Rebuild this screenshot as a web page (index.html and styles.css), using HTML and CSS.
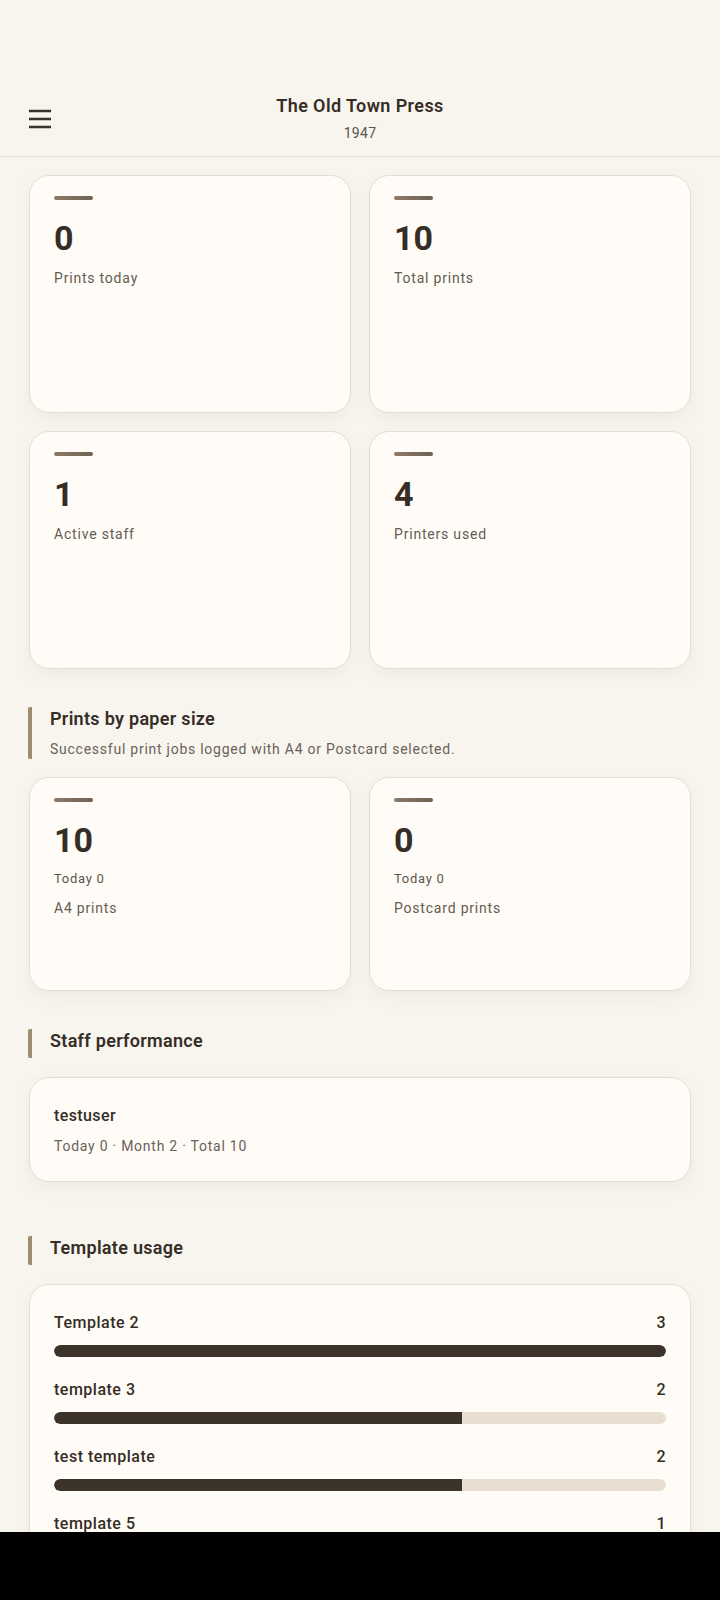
FILE: index.html
```html
<!DOCTYPE html>
<html lang="en">
<head>
<meta charset="utf-8">
<title>The Old Town Press</title>
<link rel="stylesheet" href="styles.css">
</head>
<body>
<header class="topbar">
  <div class="menu">
    <svg width="24" height="20" viewBox="0 0 24 20"><path d="M1 2h22M1 10h22M1 18h22" stroke="#3a322b" stroke-width="2.3" fill="none"/></svg>
  </div>
  <div class="brand">
    <div class="brand-title">The Old Town Press</div>
    <div class="brand-sub">1947</div>
  </div>
  <div></div>
</header>
<main class="content">
  <div class="grid">
    <div class="card stat"><div class="accent"></div><div class="num">0</div><div class="label">Prints today</div></div>
    <div class="card stat"><div class="accent"></div><div class="num">10</div><div class="label">Total prints</div></div>
    <div class="card stat"><div class="accent"></div><div class="num">1</div><div class="label">Active staff</div></div>
    <div class="card stat"><div class="accent"></div><div class="num">4</div><div class="label">Printers used</div></div>
  </div>

  <section class="section">
    <div class="sec-head">
      <div class="sec-title">Prints by paper size</div>
      <div class="sec-sub">Successful print jobs logged with A4 or Postcard selected.</div>
    </div>
    <div class="grid">
      <div class="card paper"><div class="accent"></div><div class="num">10</div><div class="today">Today 0</div><div class="label">A4 prints</div></div>
      <div class="card paper"><div class="accent"></div><div class="num">0</div><div class="today">Today 0</div><div class="label">Postcard prints</div></div>
    </div>
  </section>

  <section class="section">
    <div class="sec-head short">
      <div class="sec-title">Staff performance</div>
    </div>
    <div class="card staff">
      <div class="staff-name">testuser</div>
      <div class="staff-meta">Today 0 · Month 2 · Total 10</div>
    </div>
  </section>

  <section class="section wide">
    <div class="sec-head short">
      <div class="sec-title">Template usage</div>
    </div>
    <div class="card usage">
      <div class="row"><div class="row-top"><span>Template 2</span><span>3</span></div><div class="track"><div class="fill full" style="width:100%"></div></div></div>
      <div class="row"><div class="row-top"><span>template 3</span><span>2</span></div><div class="track"><div class="fill" style="width:66.67%"></div></div></div>
      <div class="row"><div class="row-top"><span>test template</span><span>2</span></div><div class="track"><div class="fill" style="width:66.67%"></div></div></div>
      <div class="row"><div class="row-top"><span>template 5</span><span>1</span></div><div class="track"><div class="fill" style="width:33.33%"></div></div></div>
      <div class="row"><div class="row-top"><span>Template 1</span><span>1</span></div><div class="track"><div class="fill" style="width:33.33%"></div></div></div>
    </div>
  </section>
</main>
<div class="navbar"></div>
</body>
</html>
```

FILE: styles.css
```css
* { box-sizing: border-box; }
html, body {
  margin: 0;
  padding: 0;
  background: #f8f5ef;
  font-family: Roboto, "Noto Sans", "Liberation Sans", sans-serif;
  color: #3a3129;
}
.topbar {
  display: grid;
  grid-template-columns: 1fr auto 1fr;
  align-items: center;
  padding: 94px 0 13px;
  border-bottom: 1px solid #e3ddd4;
  background: #f8f5ef;
}
.menu {
  padding-left: 28px;
  display: flex;
  align-items: center;
  height: 20px;
}
.menu svg { display: block; }
.brand { text-align: center; }
.brand-title {
  font-size: 18px;
  line-height: 24px;
  font-weight: 600;
  letter-spacing: 0.4px;
  color: #352d26;
}
.brand-sub {
  margin-top: 5px;
  font-size: 14px;
  line-height: 20px;
  letter-spacing: 0.3px;
  color: #5c534b;
}
.content {
  padding: 18px 29px 120px;
}
.grid {
  display: grid;
  grid-template-columns: 1fr 1fr;
  gap: 18px;
}
.card {
  background: #fffcf7;
  border: 1px solid #e4ddd3;
  border-radius: 20px;
  box-shadow: 0 6px 18px rgba(90, 70, 40, 0.06);
}
.stat, .paper {
  padding: 20px 24px;
}
.stat { min-height: 238px; }
.paper { min-height: 214px; }
.accent {
  width: 39px;
  height: 4px;
  border-radius: 2px;
  background: linear-gradient(90deg, #8c7a66, #6f6253);
}
.num {
  margin-top: 18px;
  font-size: 34px;
  line-height: 40px;
  font-weight: 700;
  color: #352d26;
}
.label {
  margin-top: 10px;
  font-size: 14px;
  line-height: 20px;
  color: #655b52;
  letter-spacing: 0.8px;
}
.today {
  margin-top: 10px;
  font-size: 13px;
  line-height: 18px;
  color: #5e554c;
  letter-spacing: 0.7px;
}
.paper .label { margin-top: 10px; }
.section { margin-top: 38px; }
.section.wide { margin-top: 54px; }
.sec-head {
  border-left: 4px solid #9e8a6e;
  border-radius: 2px;
  padding: 0 0 0 18px;
  margin-left: -1px;
  margin-bottom: 18px;
}
.sec-head.short { padding: 0 0 5px 18px; margin-bottom: 19px; }
.sec-title {
  font-size: 18px;
  line-height: 24px;
  font-weight: 600;
  letter-spacing: 0.3px;
  color: #352d26;
}
.sec-sub {
  margin-top: 8px;
  font-size: 14px;
  line-height: 20px;
  color: #6b6158;
  letter-spacing: 0.75px;
}
.staff {
  padding: 27px 24px 25px;
}
.staff-name {
  font-size: 16px;
  line-height: 22px;
  font-weight: 500;
  letter-spacing: 0.4px;
  color: #352d26;
}
.staff-meta {
  margin-top: 9px;
  font-size: 14px;
  line-height: 20px;
  color: #6b6158;
  letter-spacing: 0.75px;
}
.usage {
  padding: 27px 24px 20px;
}
.row + .row { margin-top: 22px; }
.row-top {
  display: flex;
  justify-content: space-between;
  font-size: 16px;
  line-height: 22px;
  font-weight: 500;
  letter-spacing: 0.5px;
  color: #352d26;
}
.track {
  margin-top: 11px;
  height: 12px;
  border-radius: 6px;
  background: #e9dfd1;
  overflow: hidden;
}
.fill {
  height: 100%;
  background: #3c332b;
  border-radius: 6px 0 0 6px;
}
.fill.full { border-radius: 6px; }
.navbar {
  position: fixed;
  left: 0;
  right: 0;
  bottom: 0;
  height: 68px;
  background: #000;
}
```
